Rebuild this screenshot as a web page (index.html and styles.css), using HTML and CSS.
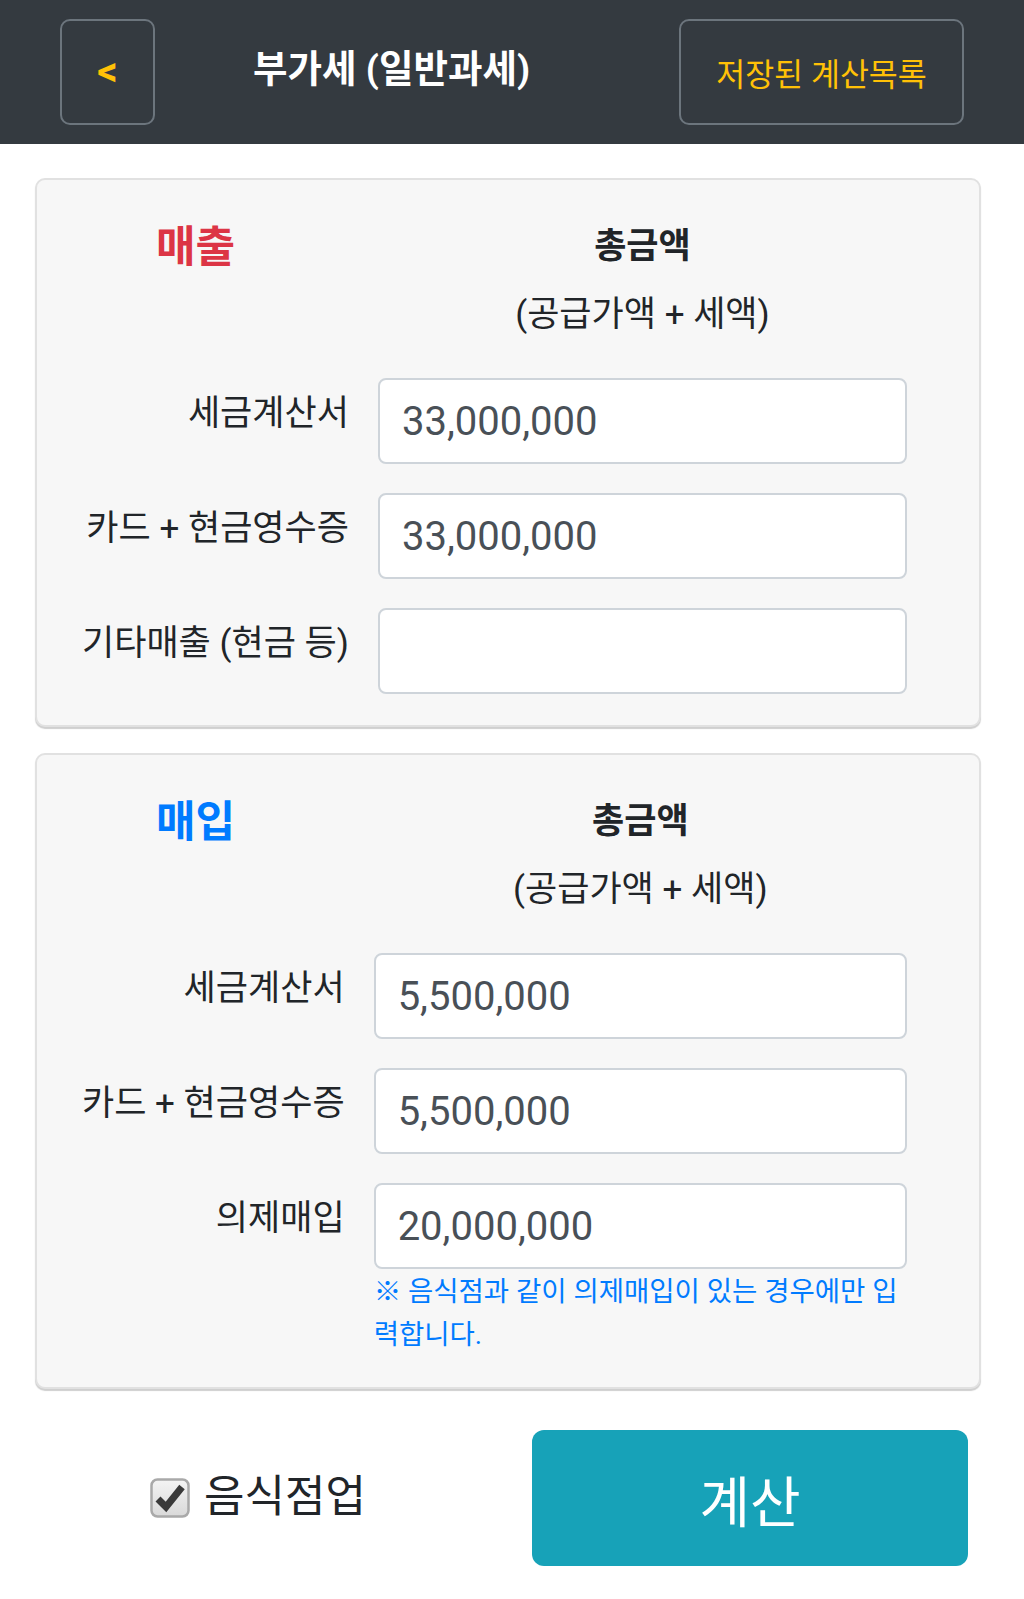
FILE: index.html
```html
<!DOCTYPE html>
<html lang="ko">
<head>
<meta charset="utf-8">
<title>부가세 (일반과세)</title>
<link rel="stylesheet" href="styles.css">
</head>
<body>
<header class="topbar">
  <button class="btn-back" type="button">&lt;</button>
  <h1 class="title">부가세 (일반과세)</h1>
  <button class="btn-saved" type="button">저장된 계산목록</button>
</header>
<main class="content">
  <section class="card">
    <div class="form-grid">
      <div class="section-title sales">매출</div>
      <div class="col-head"><strong>총금액</strong><br>(공급가액 + 세액)</div>
      <label class="field-label">세금계산서</label>
      <input class="field" type="text" value="33,000,000">
      <label class="field-label">카드 + 현금영수증</label>
      <input class="field" type="text" value="33,000,000">
      <label class="field-label">기타매출 (현금 등)</label>
      <input class="field" type="text" value="">
    </div>
  </section>
  <section class="card">
    <div class="form-grid">
      <div class="section-title purchase">매입</div>
      <div class="col-head"><strong>총금액</strong><br>(공급가액 + 세액)</div>
      <label class="field-label">세금계산서</label>
      <input class="field" type="text" value="5,500,000">
      <label class="field-label">카드 + 현금영수증</label>
      <input class="field" type="text" value="5,500,000">
      <label class="field-label">의제매입</label>
      <input class="field" type="text" value="20,000,000">
      <p class="note">※ 음식점과 같이 의제매입이 있는 경우에만 입력합니다.</p>
    </div>
  </section>
  <div class="actions">
    <label class="check-label">
      <span class="check-box">
        <svg viewBox="0 0 40 40" width="40" height="40" aria-hidden="true">
          <defs>
            <linearGradient id="cbg" x1="0" y1="0" x2="0" y2="1">
              <stop offset="0" stop-color="#f4f4f4"/>
              <stop offset="1" stop-color="#d9d9d9"/>
            </linearGradient>
          </defs>
          <rect x="1.5" y="1.5" width="37" height="37" rx="6" fill="url(#cbg)" stroke="#a9a9a9" stroke-width="2.5"/>
          <path d="M8 21 L16 29 L32 9" fill="none" stroke="#3a3a3a" stroke-width="7" stroke-linecap="butt" stroke-linejoin="miter"/>
        </svg>
      </span>
      <span class="check-text">음식점업</span>
    </label>
    <button class="btn-calc" type="button">계산</button>
  </div>
</main>
</body>
</html>
```
FILE: styles.css
```css
html, body {
  margin: 0;
  padding: 0;
  background: #ffffff;
}
body {
  font-family: Roboto, "Noto Sans CJK KR", "Noto Sans", sans-serif;
  color: #212529;
}
.topbar {
  height: 144px;
  background: #343a40;
  display: flex;
  align-items: center;
  padding: 0 60px;
  box-sizing: border-box;
}
.btn-back {
  width: 95px;
  height: 106px;
  background: transparent;
  border: 2px solid #6c757d;
  border-radius: 10px;
  color: #ffc107;
  font-family: Roboto, "Noto Sans CJK KR", sans-serif;
  font-size: 40px;
  font-weight: 700;
  padding: 0;
  line-height: 1;
}
.title {
  margin: 0 0 0 98px;
  color: #ffffff;
  font-size: 37.5px;
  font-weight: 700;
  line-height: 1;
  padding-bottom: 4px;
}
.btn-saved {
  margin-left: auto;
  width: 285px;
  height: 106px;
  background: transparent;
  border: 2px solid #6c757d;
  border-radius: 10px;
  color: #ffc107;
  font-family: Roboto, "Noto Sans CJK KR", sans-serif;
  font-size: 31.5px;
  font-weight: 400;
  padding: 0;
}
.content {
  padding: 34px 43px 0 35px;
}
.card {
  background: #f7f7f7;
  border: 2px solid #e1e1e1;
  border-radius: 10px;
  box-shadow: 0 2px 1px #cfcfcf;
  padding: 33px 72px 31px 45px;
  margin-bottom: 26px;
}
.form-grid {
  display: grid;
  grid-template-columns: max-content 1fr;
  column-gap: 29px;
  row-gap: 29px;
}
.section-title {
  font-size: 43px;
  font-weight: 700;
  line-height: 68px;
  padding-left: 74px;
}
.sales { color: #dc3545; }
.purchase { color: #007bff; }
.col-head {
  text-align: center;
  font-size: 35px;
  line-height: 68px;
  color: #212529;
}
.col-head strong {
  font-weight: 700;
}
.field-label {
  font-size: 35px;
  line-height: 48px;
  padding-top: 12px;
  text-align: right;
  color: #212529;
  white-space: nowrap;
}
.field {
  box-sizing: border-box;
  width: 100%;
  height: 86px;
  border: 2px solid #ced4da;
  border-radius: 8px;
  background: #ffffff;
  padding: 0 22px;
  font-family: Roboto, "Noto Sans CJK KR", sans-serif;
  font-size: 40px;
  color: #495057;
  outline: none;
}
.note {
  grid-column: 2;
  margin: -28px 0 0 0;
  font-size: 27.5px;
  line-height: 43px;
  color: #007bff;
  word-break: break-all;
}
.actions {
  display: flex;
  align-items: center;
  margin-top: 41px;
}
.check-label {
  display: flex;
  align-items: center;
  margin-left: 115px;
  gap: 14px;
}
.check-box {
  display: block;
  width: 40px;
  height: 40px;
}
.check-box svg {
  display: block;
}
.check-text {
  font-size: 44px;
  line-height: 1;
  color: #212529;
  padding-bottom: 2px;
}
.btn-calc {
  margin-left: auto;
  margin-right: 13px;
  width: 436px;
  height: 136px;
  background: #17a2b8;
  border: none;
  border-radius: 12px;
  color: #ffffff;
  font-family: Roboto, "Noto Sans CJK KR", sans-serif;
  font-size: 55px;
  font-weight: 400;
  padding: 0;
}
```
